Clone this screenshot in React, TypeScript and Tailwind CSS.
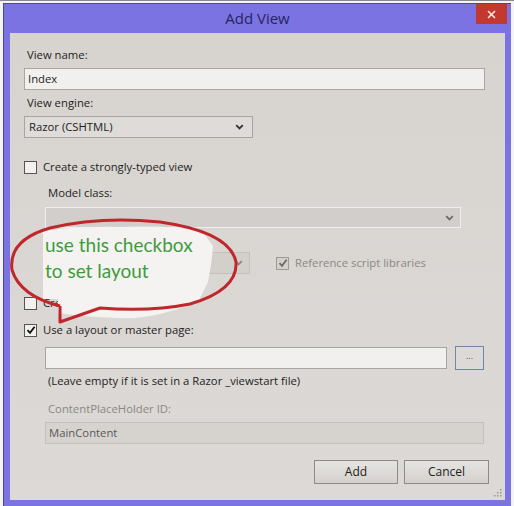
import React from 'react';

const font = { fontFamily: '"Open Sans", "Noto Sans", sans-serif' };

function Check({ checked, disabled }: { checked?: boolean; disabled?: boolean }) {
  return (
    <span
      className={`flex h-[13px] w-[13px] shrink-0 items-center justify-center border ${
        disabled ? 'border-[#9c9a97] bg-[#d3d0cc]' : 'border-[#555] bg-[#f2f1ef]'
      }`}
    >
      {checked && (
        <svg width="10" height="10" viewBox="0 0 10 10">
          <path d="M1.5 5.2 L4 7.8 L8.6 1.8" fill="none" stroke={disabled ? '#6b6966' : '#111'} strokeWidth="1.8" />
        </svg>
      )}
    </span>
  );
}

function Chevron({ color = '#333' }: { color?: string }) {
  return (
    <svg width="9" height="6" viewBox="0 0 9 6">
      <path d="M1.2 1.2 L4.5 4.5 L7.8 1.2" fill="none" stroke={color} strokeWidth="1.8" />
    </svg>
  );
}

function Annotation() {
  return (
    <div className="pointer-events-none absolute inset-0">
      <svg width="514" height="506" className="absolute inset-0">
        <path
          d="M43 231 Q80 226 120 227 Q170 225 202 231 L213 246 Q212 262 208 282 L198 302 Q172 311 160 314 Q140 319 118 318 Q85 317 58 313 L58 299 L43 299 Z"
          fill="#f4f3f1"
        />
        <path
          d="M60 306 Q20 296 12 270 Q8 240 50 228 Q100 216 160 222 Q230 232 236 262 Q238 290 190 304 Q150 312 100 308 L60 322 L60 306"
          fill="none"
          stroke="#c0272d"
          strokeWidth="3"
          strokeLinejoin="round"
        />
      </svg>
      <div
        className="absolute left-[45px] top-[232px] text-[19px] leading-[26px] text-[#3f9b3c]"
        style={{ fontFamily: 'Lato, "Open Sans", sans-serif' }}
      >
        <div>use this checkbox</div>
        <div>to set layout</div>
      </div>
    </div>
  );
}

export default function App() {
  return (
    <div className="relative h-[506px] w-[514px] overflow-hidden bg-[#f4f4f4] text-[11.3px] text-[#1d1d1d]" style={font}>
      <div className="absolute left-0 top-0 h-px w-[514px] bg-[#8a8a8a]" />
      <div className="ml-[3px] mt-[3px] flex h-[503px] w-[508px] flex-col border-l border-t border-[#4b4790] bg-[#7b73e2]">
        <div className="grid h-[29px] grid-cols-[1fr_auto_1fr] items-start">
          <div />
          <div className="pt-[3px] text-[15px] text-[#262660]">Add View</div>
          <div className="flex justify-end pr-[4px]">
            <div className="flex h-[20px] w-[31px] items-center justify-center bg-[#c4392f]">
              <svg width="9" height="9" viewBox="0 0 9 9">
                <path d="M1 1 L8 8 M8 1 L1 8" stroke="#f7ecea" strokeWidth="1.6" />
              </svg>
            </div>
          </div>
        </div>

        <div className="ml-[6px] mr-[6px] flex h-[467px] flex-col bg-gradient-to-b from-[#d7d4d0] to-[#dcd9d6] pl-[14px]">
          <div className="mt-[14px] h-[16px] pl-[3px] leading-[16px]">View name:</div>
          <div className="mt-[5px] flex h-[22px] w-[461px] items-center border border-[#a7a5a2] bg-[#f1f0ee] pl-[3px]">
            Index
          </div>
          <div className="mt-[5px] h-[16px] pl-[3px] leading-[16px]">View engine:</div>
          <div className="mt-[5px] flex h-[22px] w-[229px] items-center justify-between border border-[#a7a5a2] bg-[#dedbd8] pl-[4px] pr-[8px]">
            <span>Razor (CSHTML)</span>
            <Chevron />
          </div>

          <div className="mt-[21px] flex h-[16px] items-center gap-[6px]">
            <Check />
            <span>Create a strongly-typed view</span>
          </div>

          <div className="pl-[21px]">
            <div className="mt-[10px] h-[16px] pl-[3px] leading-[16px]">Model class:</div>
            <div className="mt-[6px] flex h-[21px] w-[416px] items-center justify-end border border-[#f0efed] bg-[#d1cecb] pr-[6px]">
              <Chevron color="#6e6c69" />
            </div>

            <div className="mt-[24px] flex h-[22px] items-center">
              <div className="flex h-[22px] w-[205px] items-center justify-end border border-[#c4c1bd] bg-[#d3d0cc] pr-[6px]">
                <Chevron color="#8a8885" />
              </div>
              <div className="ml-[26px] flex items-center gap-[6px] text-[#8a8885]">
                <Check checked disabled />
                <span>Reference script libraries</span>
              </div>
            </div>
          </div>

          <div className="mt-[21px] flex h-[16px] items-center gap-[6px]">
            <Check />
            <span>Create as a partial view</span>
          </div>

          <div className="mt-[11px] flex h-[16px] items-center gap-[6px]">
            <Check checked />
            <span>Use a layout or master page:</span>
          </div>

          <div className="pl-[21px]">
            <div className="mt-[8px] flex h-[24px] items-center gap-[8px]">
              <div className="h-[22px] w-[402px] border border-[#a7a5a2] bg-[#f1f0ee]" />
              <div className="flex h-[24px] w-[29px] items-center justify-center border border-[#6f88a8] bg-[#dcdad7] pb-[4px] text-[9px] text-[#555]">
                ...
              </div>
            </div>
            <div className="mt-[3px] h-[16px] pl-[3px] leading-[16px]">(Leave empty if it is set in a Razor _viewstart file)</div>
            <div className="mt-[12px] h-[16px] pl-[3px] leading-[16px] text-[#8a8885]">ContentPlaceHolder ID:</div>
            <div className="mt-[5px] flex h-[22px] w-[439px] items-center border border-[#c4c1bd] bg-[#d6d3cf] pl-[3px] text-[#5a5856]">
              MainContent
            </div>
          </div>

          <div className="mt-[16px] flex justify-end gap-[6px] pr-[16px]">
            <div className="flex h-[24px] w-[84px] items-center justify-center border border-[#8d8b88] bg-gradient-to-b from-[#e6e4e1] to-[#d4d1cd] text-[12px]">
              Add
            </div>
            <div className="flex h-[24px] w-[85px] items-center justify-center border border-[#8d8b88] bg-gradient-to-b from-[#e6e4e1] to-[#d4d1cd] text-[12px]">
              Cancel
            </div>
          </div>

          <div className="mt-auto flex justify-end pb-[3px] pr-[3px]">
            <svg width="8" height="8" viewBox="0 0 8 8">
              <g fill="#9a9895">
                <rect x="6" y="0" width="1.5" height="1.5" />
                <rect x="3" y="3" width="1.5" height="1.5" />
                <rect x="6" y="3" width="1.5" height="1.5" />
                <rect x="0" y="6" width="1.5" height="1.5" />
                <rect x="3" y="6" width="1.5" height="1.5" />
                <rect x="6" y="6" width="1.5" height="1.5" />
              </g>
            </svg>
          </div>
        </div>
      </div>
      <Annotation />
    </div>
  );
}
